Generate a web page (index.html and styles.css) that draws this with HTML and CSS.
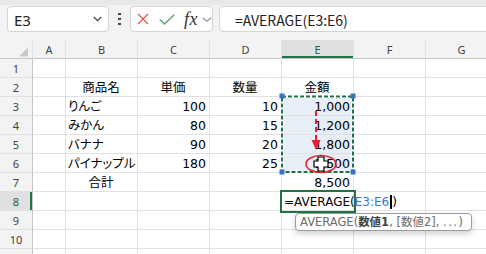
FILE: index.html
```html
<!DOCTYPE html>
<html lang="ja">
<head>
    <meta charset="UTF-8" />
    <meta name="viewport" content="width=device-width, initial-scale=1.0" />
    <title>AVERAGE</title>
    <link rel="stylesheet" href="styles.css">
</head>
<body>
    <div class="strip"></div>
    <div class="fbar">
        <div class="namebox">
            <span class="ref">E3</span>
            <svg width="9" height="6" viewBox="0 0 9 6"><polyline points="0.8,1 4.5,4.6 8.2,1" fill="none" stroke="#444" stroke-width="1.2"/></svg>
        </div>
        <div class="dots"><i></i><i></i><i></i></div>
        <div class="btns">
            <svg class="cancel" width="12" height="12" viewBox="0 0 12 12"><path d="M1 1 L11 11 M11 1 L1 11" stroke="#e2554f" stroke-width="1.3" fill="none"/></svg>
            <svg class="enter" width="16" height="11" viewBox="0 0 16 11"><polyline points="0.8,5.5 5.5,10 15.2,0.8" fill="none" stroke="#56a46c" stroke-width="1.4"/></svg>
            <span class="fx">fx</span>
            <svg class="more" width="10" height="5" viewBox="0 0 10 5"><polyline points="0.8,0.8 5,4.2 9.2,0.8" fill="none" stroke="#8c8ca0" stroke-width="1.1"/></svg>
        </div>
        <div class="formula">=AVERAGE(E3:E6)</div>
    </div>

    <div class="sheet">
        <div class="ch corner"><svg width="33" height="19" viewBox="0 0 33 19"><polygon points="28,7.5 28,16.5 19,16.5" fill="#c9c9c9"/></svg></div>
        <div class="ch">A</div><div class="ch">B</div><div class="ch">C</div><div class="ch">D</div><div class="ch on">E</div><div class="ch">F</div><div class="ch">G</div>

        <div class="rh">1</div><div></div><div></div><div></div><div></div><div></div><div></div><div></div>
        <div class="rh">2</div><div></div><div class="mid">商品名</div><div class="mid">単価</div><div class="mid">数量</div><div class="mid">金額</div><div></div><div></div>
        <div class="rh">3</div><div></div><div class="kana">りんご</div><div class="num">100</div><div class="num">10</div><div class="num sel">1,000</div><div></div><div></div>
        <div class="rh">4</div><div></div><div class="kana">みかん</div><div class="num">80</div><div class="num">15</div><div class="num sel">1,200</div><div></div><div></div>
        <div class="rh">5</div><div></div><div class="kana">バナナ</div><div class="num">90</div><div class="num">20</div><div class="num sel">1,800</div><div></div><div></div>
        <div class="rh">6</div><div></div><div class="kana">パイナップル</div><div class="num">180</div><div class="num">25</div><div class="num sel">1,500</div><div></div><div></div>
        <div class="rh">7</div><div></div><div class="mid">合計</div><div></div><div></div><div class="num">8,500</div><div></div><div></div>
        <div class="rh on">8</div><div></div><div></div><div></div><div></div><div class="edit">=AVERAGE(<span class="arg">E3:E6</span><span class="caret"></span>)</div><div></div><div></div>
        <div class="rh">9</div><div></div><div></div><div></div><div></div><div></div><div></div><div></div>
        <div class="rh">10</div><div></div><div></div><div></div><div></div><div></div><div></div><div></div>
        <div class="rh"></div><div></div><div></div><div></div><div></div><div></div><div></div><div></div>

        <svg class="marks" width="486" height="214" viewBox="0 40 486 214">
            <rect x="282" y="96.5" width="71" height="75.5" fill="none" stroke="#fff" stroke-width="3"/>
            <rect x="282" y="96.5" width="71" height="75.5" fill="none" stroke="#217346" stroke-width="2" stroke-dasharray="4 2"/>
            <rect x="279.5" y="93.5" width="5" height="5" fill="#3a72c4"/>
            <rect x="350.5" y="93.5" width="5" height="5" fill="#3a72c4"/>
            <rect x="279.5" y="169.5" width="5" height="5" fill="#3a72c4"/>
            <rect x="350.5" y="169.5" width="5" height="5" fill="#3a72c4"/>
            <line x1="316" y1="111" x2="316" y2="141" stroke="#e5202a" stroke-width="2" stroke-dasharray="5 3"/>
            <polygon points="311.5,140 320.5,140 316,150" fill="#e5202a"/>
            <ellipse cx="321" cy="164" rx="15" ry="8.5" fill="none" stroke="#e5202a" stroke-width="1.5"/>
            <path d="M318 157 H324 V161 H328 V167 H324 V171 H318 V167 H314 V161 H318 Z" fill="#fff" stroke="#000" stroke-width="1.2"/>
        </svg>

        <div class="tip">AVERAGE(<b>数値1</b>, [数値2], <span class="ell">...</span>)</div>
    </div>
</body>
</html>
```

FILE: styles.css
```css
* {
    box-sizing: border-box;
}
body {
    margin: 0;
    width: 486px;
    height: 254px;
    overflow: hidden;
    background: #fff;
    font-family: "DejaVu Sans", "Noto Sans CJK JP", sans-serif;
    color: #000;
}
.strip {
    height: 5px;
    background: #e8e8e8;
}
.fbar {
    display: flex;
    align-items: center;
    height: 35px;
    padding: 1px 0 8px 7px;
    background: #f3f3f3;
}
.namebox {
    display: flex;
    align-items: center;
    justify-content: space-between;
    width: 102px;
    height: 26px;
    padding: 0 6px;
    background: #fff;
    border: 1px solid #d4d4d4;
    border-radius: 4px;
}
.ref {
    font: 15px "Noto Sans", sans-serif;
    line-height: 22px;
    padding-top: 2px;
    color: #222;
}
.dots {
    display: flex;
    flex-direction: column;
    align-items: center;
    gap: 2.5px;
    width: 21px;
}
.dots i {
    width: 2.5px;
    height: 2.5px;
    background: #444;
}
.btns {
    display: flex;
    align-items: center;
    width: 83px;
    height: 26px;
    padding-left: 6px;
    background: #fff;
    border: 1px solid #d4d4d4;
    border-radius: 4px;
}
.enter {
    margin-left: 10px;
}
.fx {
    margin-left: 9px;
    font: italic 18px "Liberation Serif", serif;
    letter-spacing: 0.5px;
    color: #333;
    line-height: 22px;
}
.more {
    margin-left: 4px;
}
.formula {
    flex: 1;
    height: 26px;
    margin: 0 -8px 0 6px;
    padding: 2px 0 0 15px;
    background: #fff;
    border: 1px solid #d4d4d4;
    border-radius: 4px;
    font: 14px "Noto Sans CJK JP", sans-serif;
    line-height: 22px;
    color: #222;
}

.sheet {
    position: relative;
    display: grid;
    grid-template-columns: 33px 33px repeat(6, 72px);
    grid-auto-rows: 19px;
    font-size: 12.5px;
}
.sheet > div {
    border-right: 1px solid #e1e1e1;
    border-bottom: 1px solid #e1e1e1;
    padding: 0 3px 0 2px;
    line-height: 20px;
    white-space: nowrap;
}
.sheet > .ch,
.sheet > .rh {
    background: #f3f3f3;
    font: 11px "Noto Sans", sans-serif;
    line-height: 19.5px;
    color: #444;
    text-align: center;
    padding: 0;
}
.sheet > .ch {
    border-bottom-color: #c6c6c6;
}
.sheet > .rh {
    border-right-color: #c6c6c6;
    line-height: 20px;
}
.sheet > .corner {
    line-height: 0;
}
.sheet > .ch.on {
    background: #e0e0e0;
    box-shadow: inset 0 -2px 0 #217346;
    color: #1d5f3a;
}
.sheet > .rh.on {
    background: #e0e0e0;
    box-shadow: inset -2px 0 0 #217346;
    color: #1d5f3a;
}
.num {
    text-align: right;
}
.mid {
    text-align: center;
}
.kana {
    font-feature-settings: "palt";
}
.sheet > .sel {
    background: #e8eef8;
}
.sheet > .edit {
    position: relative;
    z-index: 1;
    font-size: 12px;
    box-shadow: 0 0 0 2px #217346;
}
.arg {
    color: #3a77c8;
}
.caret {
    display: inline-block;
    width: 2px;
    height: 14px;
    margin-left: 1px;
    vertical-align: -3px;
    background: #000;
}
.marks {
    position: absolute;
    top: 0;
    left: 0;
    pointer-events: none;
}
.sheet > .tip {
    position: absolute;
    left: 295px;
    top: 173px;
    width: 177px;
    height: 18px;
    padding: 0 0 0 4px;
    background: #fff;
    border: 1px solid #9c9c9c;
    border-radius: 4px;
    box-shadow: 0 3px 6px rgba(0, 0, 0, 0.18);
    font-size: 11.5px;
    line-height: 16px;
    color: #6b6b6b;
    z-index: 2;
}
.tip b {
    color: #444;
}
.ell {
    letter-spacing: 1.5px;
}
```
